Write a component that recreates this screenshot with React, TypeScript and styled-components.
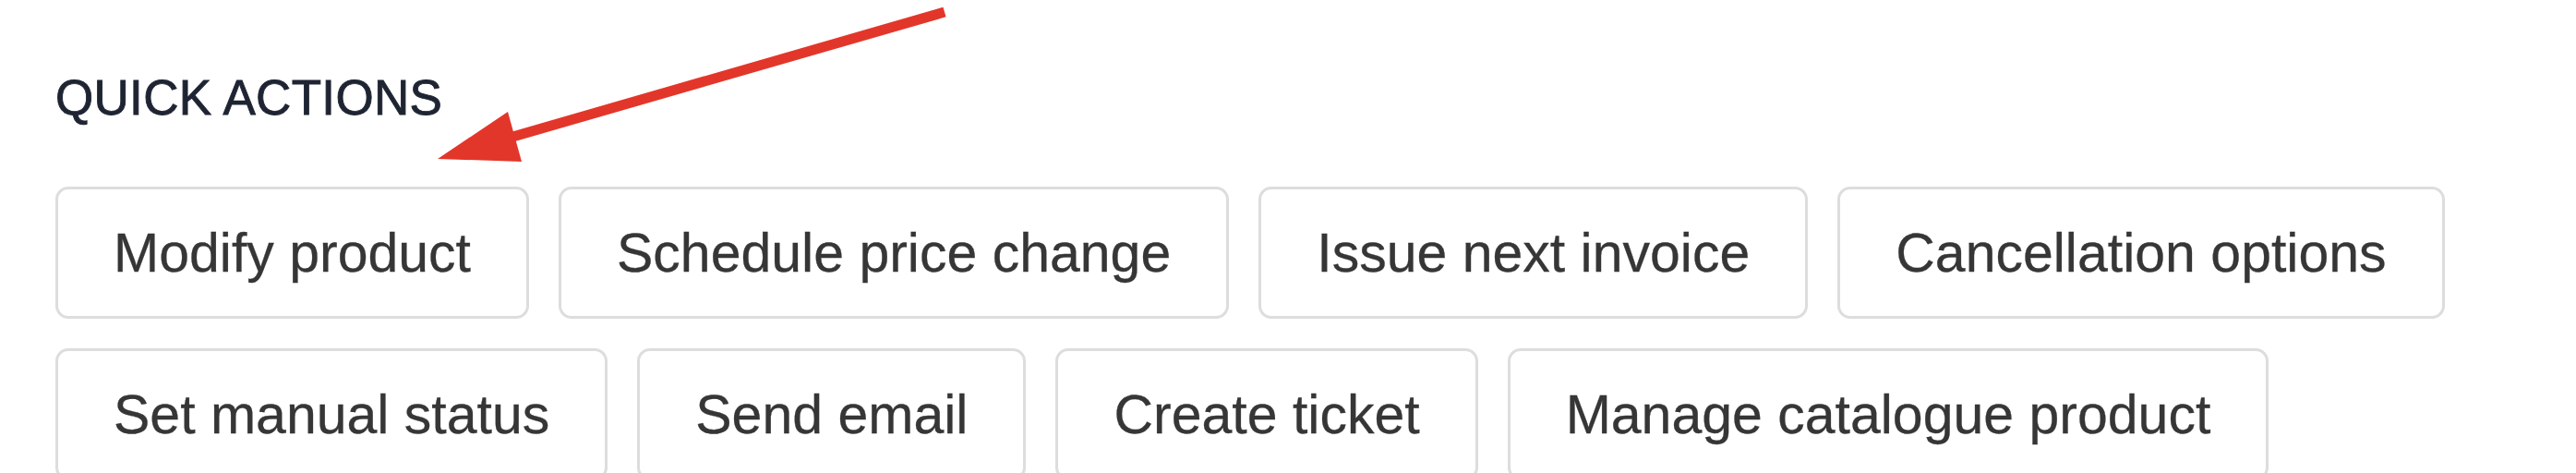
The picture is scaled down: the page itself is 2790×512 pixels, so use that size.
import React from "react";
import styled, { createGlobalStyle } from "styled-components";

const GlobalStyle = createGlobalStyle`
  html, body {
    margin: 0;
    padding: 0;
    background: #ffffff;
  }
  body {
    font-family: "Liberation Sans", Arial, Helvetica, sans-serif;
  }
`;

const Page = styled.div`
  position: relative;
  width: 2790px;
  height: 512px;
  overflow: hidden;
  box-sizing: border-box;
  padding: 74px 60px 0 60px;
  background: #ffffff;
`;

const Heading = styled.h2`
  margin: 0 0 64px 0;
  font-family: "Liberation Sans", Arial, Helvetica, sans-serif;
  font-size: 53px;
  line-height: 64px;
  font-weight: 400;
  letter-spacing: 0.3px;
  color: #1e2432;
  -webkit-text-stroke: 0.9px #1e2432;
  text-transform: uppercase;
`;

const ActionGrid = styled.div`
  display: flex;
  flex-wrap: wrap;
  gap: 32px;
  align-items: flex-start;
`;

const ActionButton = styled.button`
  display: inline-flex;
  align-items: center;
  justify-content: center;
  box-sizing: border-box;
  height: 143px;
  padding: 0 60px;
  background: #ffffff;
  border: 3px solid #dddddd;
  border-radius: 14px;
  font-family: "Liberation Sans", Arial, Helvetica, sans-serif;
  font-size: 59px;
  font-weight: 400;
  color: #363636;
  -webkit-text-stroke: 0.3px #363636;
  white-space: nowrap;
  cursor: pointer;
`;

const ArrowOverlay = styled.svg`
  position: absolute;
  left: 0;
  top: 0;
  pointer-events: none;
`;

const actions = [
  "Modify product",
  "Schedule price change",
  "Issue next invoice",
  "Cancellation options",
  "Set manual status",
  "Send email",
  "Create ticket",
  "Manage catalogue product",
];

export default function App() {
  return (
    <>
      <GlobalStyle />
      <Page>
        <Heading>Quick actions</Heading>
        <ActionGrid>
          {actions.map((label) => (
            <ActionButton key={label} type="button">
              {label}
            </ActionButton>
          ))}
        </ActionGrid>
        <ArrowOverlay width="1100" height="200" viewBox="0 0 1100 200">
          <line
            x1="1023"
            y1="13"
            x2="552"
            y2="149"
            stroke="#e3362a"
            strokeWidth="11"
            strokeLinecap="butt"
          />
          <polygon points="474,172 550,121 565,175" fill="#e3362a" />
        </ArrowOverlay>
      </Page>
    </>
  );
}
